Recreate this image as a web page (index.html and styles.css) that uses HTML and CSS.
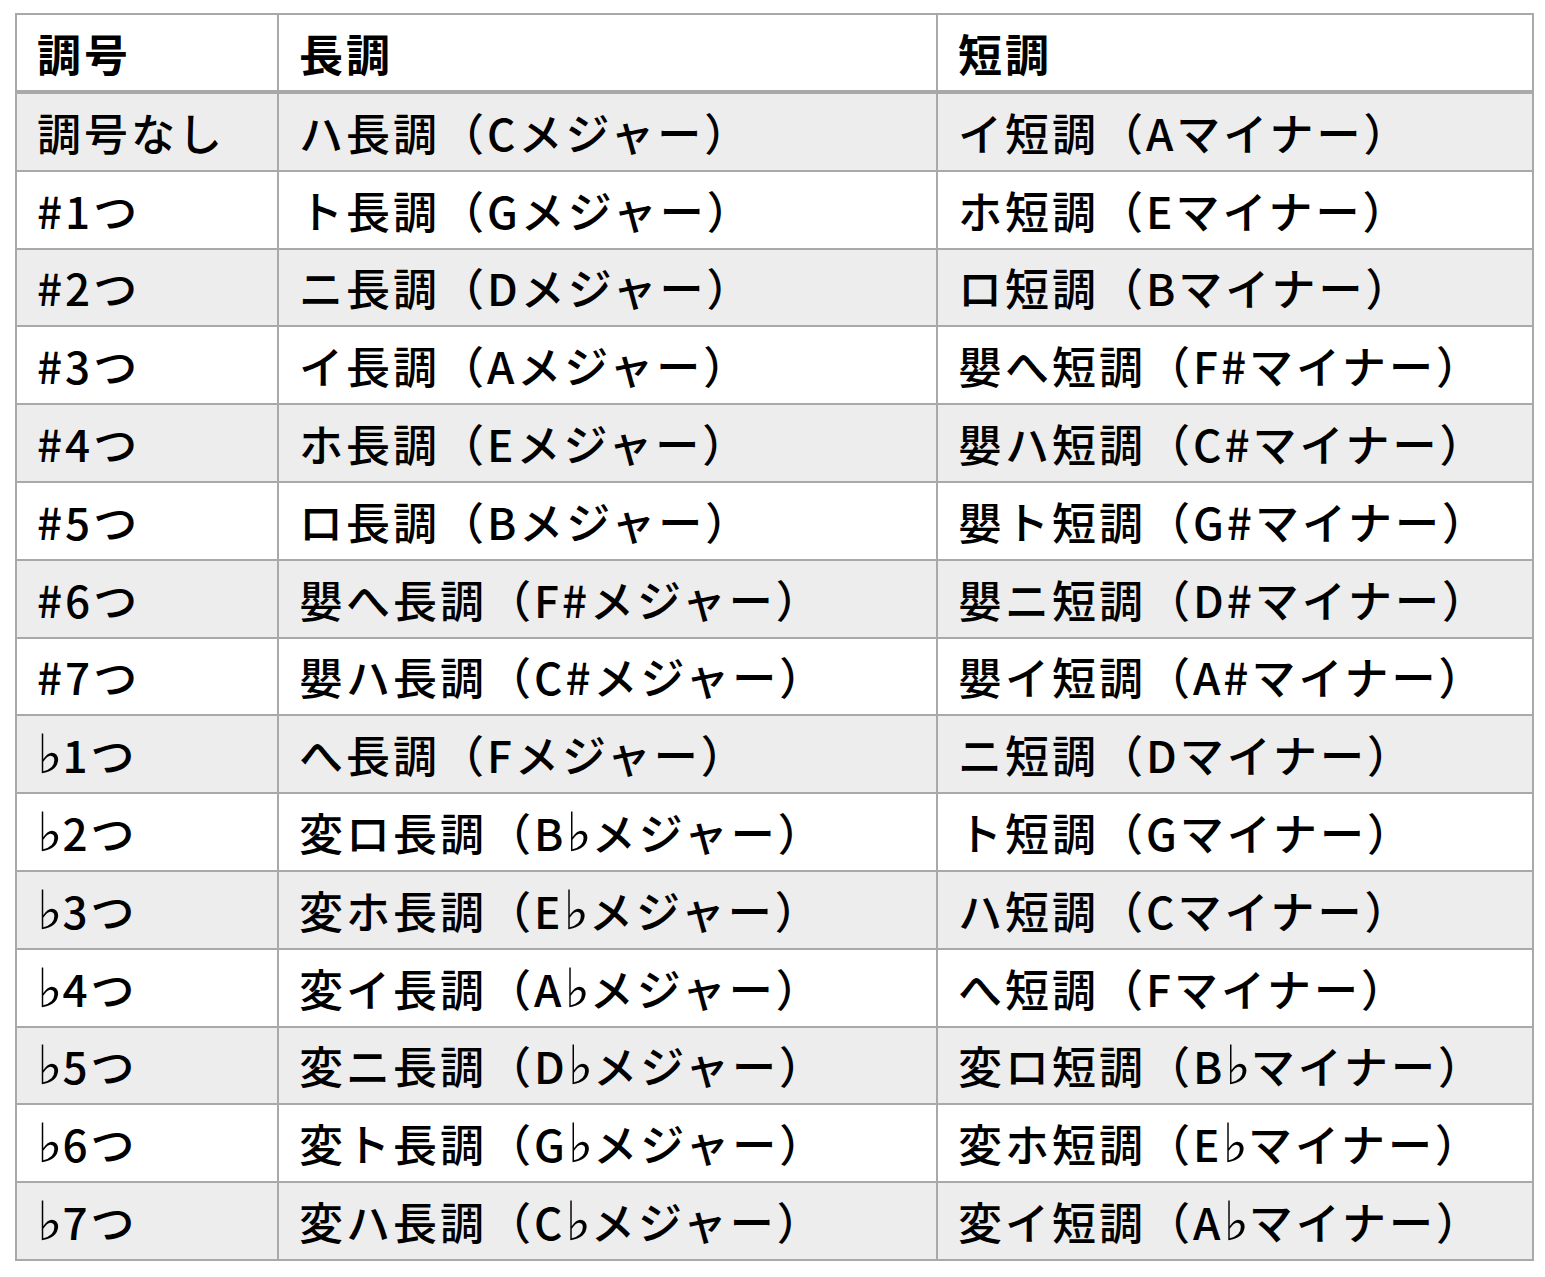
FILE: index.html
```html
<!DOCTYPE html>
<html lang="ja">
<head>
<meta charset="utf-8">
<title>調号表</title>
<link rel="stylesheet" href="styles.css">
</head>
<body>
<div class="page">
<table class="keys">
<colgroup><col class="c1"><col class="c2"><col class="c3"></colgroup>
<thead>
<tr><th>調号</th><th>長調</th><th>短調</th></tr>
</thead>
<tbody>
<tr class="alt"><td>調号なし</td><td>ハ長調（Cメジャー）</td><td>イ短調（Aマイナー）</td></tr>
<tr><td>#1つ</td><td>ト長調（Gメジャー）</td><td>ホ短調（Eマイナー）</td></tr>
<tr class="alt"><td>#2つ</td><td>ニ長調（Dメジャー）</td><td>ロ短調（Bマイナー）</td></tr>
<tr><td>#3つ</td><td>イ長調（Aメジャー）</td><td>嬰へ短調（F#マイナー）</td></tr>
<tr class="alt"><td>#4つ</td><td>ホ長調（Eメジャー）</td><td>嬰ハ短調（C#マイナー）</td></tr>
<tr><td>#5つ</td><td>ロ長調（Bメジャー）</td><td>嬰ト短調（G#マイナー）</td></tr>
<tr class="alt"><td>#6つ</td><td>嬰へ長調（F#メジャー）</td><td>嬰ニ短調（D#マイナー）</td></tr>
<tr><td>#7つ</td><td>嬰ハ長調（C#メジャー）</td><td>嬰イ短調（A#マイナー）</td></tr>
<tr class="alt"><td><span class="flat">♭</span>1つ</td><td>へ長調（Fメジャー）</td><td>ニ短調（Dマイナー）</td></tr>
<tr><td><span class="flat">♭</span>2つ</td><td>変ロ長調（B<span class="flat">♭</span>メジャー）</td><td>ト短調（Gマイナー）</td></tr>
<tr class="alt"><td><span class="flat">♭</span>3つ</td><td>変ホ長調（E<span class="flat">♭</span>メジャー）</td><td>ハ短調（Cマイナー）</td></tr>
<tr><td><span class="flat">♭</span>4つ</td><td>変イ長調（A<span class="flat">♭</span>メジャー）</td><td>へ短調（Fマイナー）</td></tr>
<tr class="alt"><td><span class="flat">♭</span>5つ</td><td>変ニ長調（D<span class="flat">♭</span>メジャー）</td><td>変ロ短調（B<span class="flat">♭</span>マイナー）</td></tr>
<tr><td><span class="flat">♭</span>6つ</td><td>変ト長調（G<span class="flat">♭</span>メジャー）</td><td>変ホ短調（E<span class="flat">♭</span>マイナー）</td></tr>
<tr class="alt"><td><span class="flat">♭</span>7つ</td><td>変ハ長調（C<span class="flat">♭</span>メジャー）</td><td>変イ短調（A<span class="flat">♭</span>マイナー）</td></tr>
</tbody>
</table>
</div>
</body>
</html>
```
FILE: styles.css
```css
html, body {
  margin: 0;
  padding: 0;
  background: #ffffff;
}
.page {
  padding: 13px 0 0 15px;
}
.keys {
  border-collapse: collapse;
  width: 1517px;
  table-layout: fixed;
  font-family: "Noto Sans CJK JP", "Noto Sans", sans-serif;
  font-size: 44px;
  color: #000;
}
.c1 { width: 262px; }
.c2 { width: 659px; }
.c3 { width: 596px; }
.keys th,
.keys td {
  border: 2px solid #a9a9a9;
  height: 75.8px;
  padding: 0 0 0 20px;
  text-align: left;
  vertical-align: middle;
  white-space: nowrap;
  line-height: 60px;
  letter-spacing: 3px;
}
.keys th {
  font-weight: 700;
  height: 75px;
  border-bottom: 4px solid #a9a9a9;
}
.keys td {
  font-weight: 500;
}
.keys tr.alt td {
  background: #ededed;
}
.flat {
  font-family: "DejaVu Sans", sans-serif;
  font-size: 54px;
  line-height: 40px;
  font-weight: 700;
  letter-spacing: 0;
}
```
